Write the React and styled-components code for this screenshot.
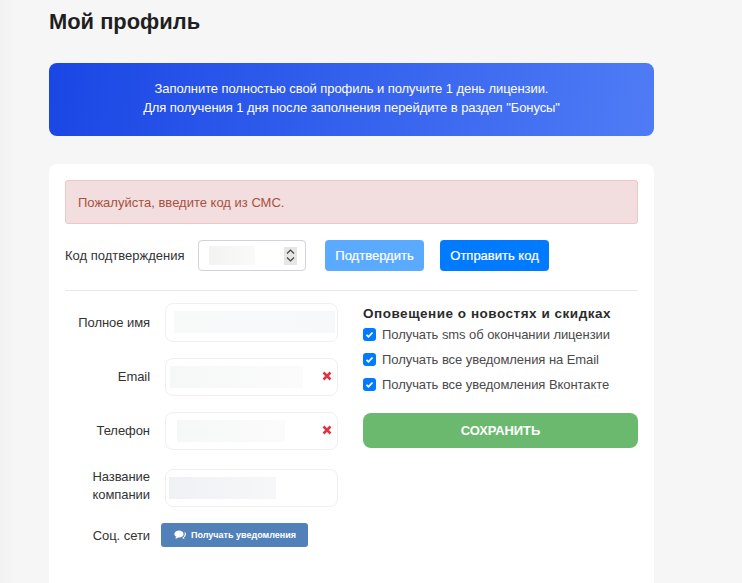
import styled, { createGlobalStyle } from "styled-components";

const GlobalStyle = createGlobalStyle`
  html, body {
    margin: 0;
    height: 100%;
    overflow: hidden;
    background: #f6f6f6;
  }
  * {
    box-sizing: border-box;
  }
`;

const Page = styled.div`
  width: 742px;
  height: 583px;
  overflow: hidden;
  padding: 10px 0 0 49px;
  background: linear-gradient(90deg, #f2f2f2 0, #f6f6f6 16px);
  font-family: "Liberation Sans", Arial, sans-serif;
  color: #212529;
`;

const Title = styled.h1`
  margin: 0 0 29px;
  height: 24px;
  font-family: "Liberation Sans", Arial, sans-serif;
  font-size: 21.900px;
  line-height: 24px;
  font-weight: 700;
  color: #1f1f1f;
`;

const Banner = styled.div`
  width: 605px;
  height: 73px;
  margin-bottom: 28px;
  padding-top: 16px;
  border-radius: 8px;
  background: linear-gradient(100deg, #1a46e5 0%, #4f7cf5 100%);
  color: #fff;
  font-size: 13px;
  line-height: 19px;
  letter-spacing: -0.08px;
  text-align: center;
`;

const Card = styled.div`
  width: 605px;
  height: 430px;
  padding: 16px;
  border-radius: 8px 8px 0 0;
  background: #fff;
`;

const Alert = styled.div`
  height: 44px;
  margin-bottom: 16px;
  padding: 0 12px;
  border: 1px solid #ecc8c8;
  border-radius: 3px;
  background: #f2dede;
  color: #a9503f;
  font-size: 13px;
  line-height: 44px;
`;

const CodeRow = styled.div`
  display: flex;
  align-items: center;
  height: 31px;
  font-size: 13px;
`;

const CodeLabel = styled.span`
  width: 133px;
  color: #333;
`;

const CodeInput = styled.div`
  display: flex;
  align-items: center;
  width: 108px;
  height: 31px;
  margin-right: 19px;
  padding: 0 8px 0 10px;
  border: 1px solid #ced4da;
  border-radius: 4px;
  background: #fff;
`;

const Blur = styled.div`
  flex: none;
  width: ${(p) => p.$w}px;
  height: ${(p) => p.$h || 22}px;
  margin-left: ${(p) => p.$ml || 0}px;
  background: linear-gradient(90deg, ${(p) => p.$from || "#f6f7f7"}, ${(p) => p.$to || "#fbfbfc"});
`;

const Spinner = styled.div`
  display: flex;
  align-items: center;
  justify-content: center;
  width: 13px;
  height: 18px;
  margin-left: auto;
  background: #e6e6e6;
`;

const Button = styled.button`
  height: 31px;
  padding: 0;
  width: ${(p) => p.$w}px;
  margin-right: ${(p) => p.$mr || 0}px;
  border: none;
  border-radius: 4px;
  background: ${(p) => p.$bg};
  color: #fff;
  font-family: "Liberation Sans", Arial, sans-serif;
  font-size: 13px;
  -webkit-text-stroke: 0.2px #fff;
`;

const Divider = styled.hr`
  height: 1px;
  margin: 19px 0 0;
  border: none;
  background: #e8e8e8;
`;

const Columns = styled.div`
  display: flex;
  gap: 25px;
`;

const LeftColumn = styled.div`
  display: flex;
  flex-direction: column;
  width: 273px;
  padding-top: 12px;
`;

const Field = styled.div`
  display: flex;
  align-items: center;
  gap: 15px;
  height: 38px;
  margin-bottom: ${(p) => p.$mb}px;
`;

const FieldLabel = styled.label`
  width: 85px;
  margin-bottom: ${(p) => p.$lift || 0}px;
  font-size: 13px;
  line-height: 18px;
  letter-spacing: -0.06px;
  text-align: right;
  color: #333;
`;

const FieldBox = styled.div`
  display: flex;
  align-items: center;
  width: 173px;
  height: ${(p) => p.$h || 38}px;
  padding-right: 5px;
  border: 1px solid #f0f0f0;
  border-radius: 8px;
`;

const Cross = styled.svg`
  flex: none;
  width: 10px;
  height: 10px;
  margin-left: auto;
  margin-bottom: 2px;
`;

const SocialRow = styled.div`
  display: flex;
  align-items: center;
  gap: 11px;
  height: 24px;
`;

const VkButton = styled.button`
  display: flex;
  align-items: center;
  gap: 4px;
  width: 147px;
  height: 24px;
  padding: 0 0 0 13px;
  border: none;
  border-radius: 3px;
  background: #5181b8;
  color: #fff;
  font-family: "Liberation Sans", Arial, sans-serif;
  font-size: 9px;
  font-weight: 700;
  white-space: nowrap;
`;

const RightColumn = styled.div`
  display: flex;
  flex-direction: column;
  width: 275px;
  padding-top: 15px;
`;

const NoticeTitle = styled.div`
  height: 16px;
  font-family: "Liberation Sans", Arial, sans-serif;
  font-size: 13.500px;
  line-height: 16px;
  font-weight: 700;
  letter-spacing: 0.52px;
  color: #2b2b2b;
`;

const CheckRow = styled.div`
  display: flex;
  align-items: center;
  gap: 6px;
  height: 25.200px;
  font-size: 13px;
  letter-spacing: -0.06px;
  color: #4a4a4a;
`;

const Check = styled.span`
  display: flex;
  align-items: center;
  justify-content: center;
  width: 13px;
  height: 13px;
  border-radius: 3px;
  background: #007bff;
`;

const SaveButton = styled.button`
  height: 35px;
  margin-top: 15.600px;
  padding: 0;
  border: none;
  border-radius: 8px;
  background: #6bb96f;
  color: #fff;
  font-family: "Liberation Sans", Arial, sans-serif;
  font-size: 13px;
  font-weight: 700;
  letter-spacing: -0.1px;
`;

const CrossIcon = () => (
  <Cross viewBox="0 0 10 10">
    <path d="M1.500 1.500l7 7M8.500 1.500l-7 7" stroke="#dc3545" strokeWidth="2.600" />
  </Cross>
);

const notices = [
  "Получать sms об окончании лицензии",
  "Получать все уведомления на Email",
  "Получать все уведомления Вконтакте",
];

export default function App() {
  return (
    <Page>
      <GlobalStyle />
      <Title>Мой профиль</Title>
      <Banner>
        Заполните полностью свой профиль и получите 1 день лицензии.
        <br />
        Для получения 1 дня после заполнения перейдите в раздел "Бонусы"
      </Banner>
      <Card>
        <Alert>Пожалуйста, введите код из СМС.</Alert>
        <CodeRow>
          <CodeLabel>Код подтверждения</CodeLabel>
          <CodeInput>
            <Blur $w={46} $h={19} $from="#f3f3f3" $to="#fafafa" />
            <Spinner>
              <svg width="9" height="15" viewBox="0 0 9 15" fill="none" stroke="#444" strokeWidth="1.200">
                <path d="M1 5.500L4.500 2 8 5.500M1 9.500L4.500 13 8 9.500" />
              </svg>
            </Spinner>
          </CodeInput>
          <Button $w={99} $mr={16} $bg="#5aabff">Подтвердить</Button>
          <Button $w={109} $bg="#007bff">Отправить код</Button>
        </CodeRow>
        <Divider />
        <Columns>
          <LeftColumn>
            <Field $mb={17}>
              <FieldLabel $lift={-2}>Полное имя</FieldLabel>
              <FieldBox $h={39}>
                <Blur $w={161} $ml={8} $from="#f8f9f9" $to="#f6f8fa" />
              </FieldBox>
            </Field>
            <Field $mb={16}>
              <FieldLabel>Email</FieldLabel>
              <FieldBox>
                <Blur $w={133} $ml={4} />
                <CrossIcon />
              </FieldBox>
            </Field>
            <Field $mb={19}>
              <FieldLabel>Телефон</FieldLabel>
              <FieldBox>
                <Blur $w={108} $ml={11} />
                <CrossIcon />
              </FieldBox>
            </Field>
            <Field $mb={16}>
              <FieldLabel $lift={5}>
                Название
                <br />
                компании
              </FieldLabel>
              <FieldBox>
                <Blur $w={107} $ml={3} $from="#eff1f4" $to="#f5f7f9" />
              </FieldBox>
            </Field>
            <SocialRow>
              <FieldLabel $lift={-2}>Соц. сети</FieldLabel>
              <VkButton>
                <svg width="13" height="10" viewBox="0 0 13 10" fill="#fff">
                  <ellipse cx="5" cy="4" rx="4.600" ry="3.600" />
                  <path d="M2 6.500L1.500 9 4.500 7.500z" />
                  <path d="M10.500 1.500c2 1.500 2 4.500-.5 6l.5 1.500-2.500-1c1.500-.5 3.500-3 2.500-6.500z" />
                </svg>
                Получать уведомления
              </VkButton>
            </SocialRow>
          </LeftColumn>
          <RightColumn>
            <NoticeTitle>Оповещение о новостях и скидках</NoticeTitle>
            {notices.map((text) => (
              <CheckRow key={text}>
                <Check>
                  <svg width="9" height="9" viewBox="0 0 9 9" fill="none" stroke="#fff" strokeWidth="1.800">
                    <path d="M1.500 4.800l2 2 4-4.300" />
                  </svg>
                </Check>
                {text}
              </CheckRow>
            ))}
            <SaveButton>СОХРАНИТЬ</SaveButton>
          </RightColumn>
        </Columns>
      </Card>
    </Page>
  );
}
